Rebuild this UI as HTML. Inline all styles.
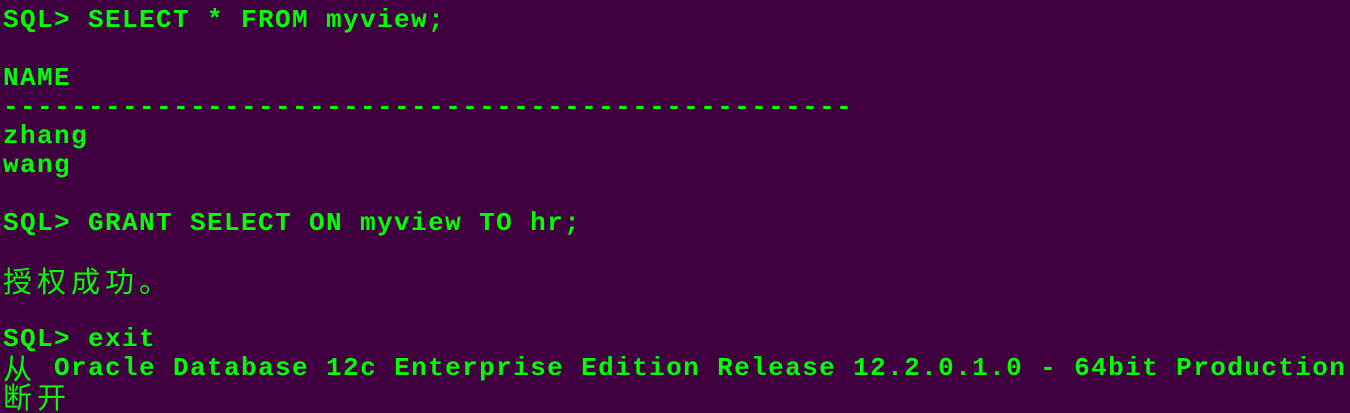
<!DOCTYPE html>
<html><head><meta charset="utf-8"><style>
html,body{margin:0;padding:0;background:#400040;width:1350px;height:413px;overflow:hidden}
pre{margin:0;padding:6px 0 0 3px;font-family:"Liberation Mono",monospace;font-weight:bold;font-size:26px;line-height:29px;letter-spacing:1.4px;color:#00ff00}
.c{font-family:"Liberation Mono","Noto Sans CJK SC",monospace;font-weight:normal;font-size:29px;line-height:29px;letter-spacing:5px;vertical-align:top;position:relative;top:3px}
</style></head><body><pre>SQL&gt; SELECT * FROM myview;

NAME
--------------------------------------------------
zhang
wang

SQL&gt; GRANT SELECT ON myview TO hr;

<span class="c">授权成功。</span>

SQL&gt; exit
<span class="c">从</span> Oracle Database 12c Enterprise Edition Release 12.2.0.1.0 - 64bit Production
<span class="c">断开</span></pre></body></html>
